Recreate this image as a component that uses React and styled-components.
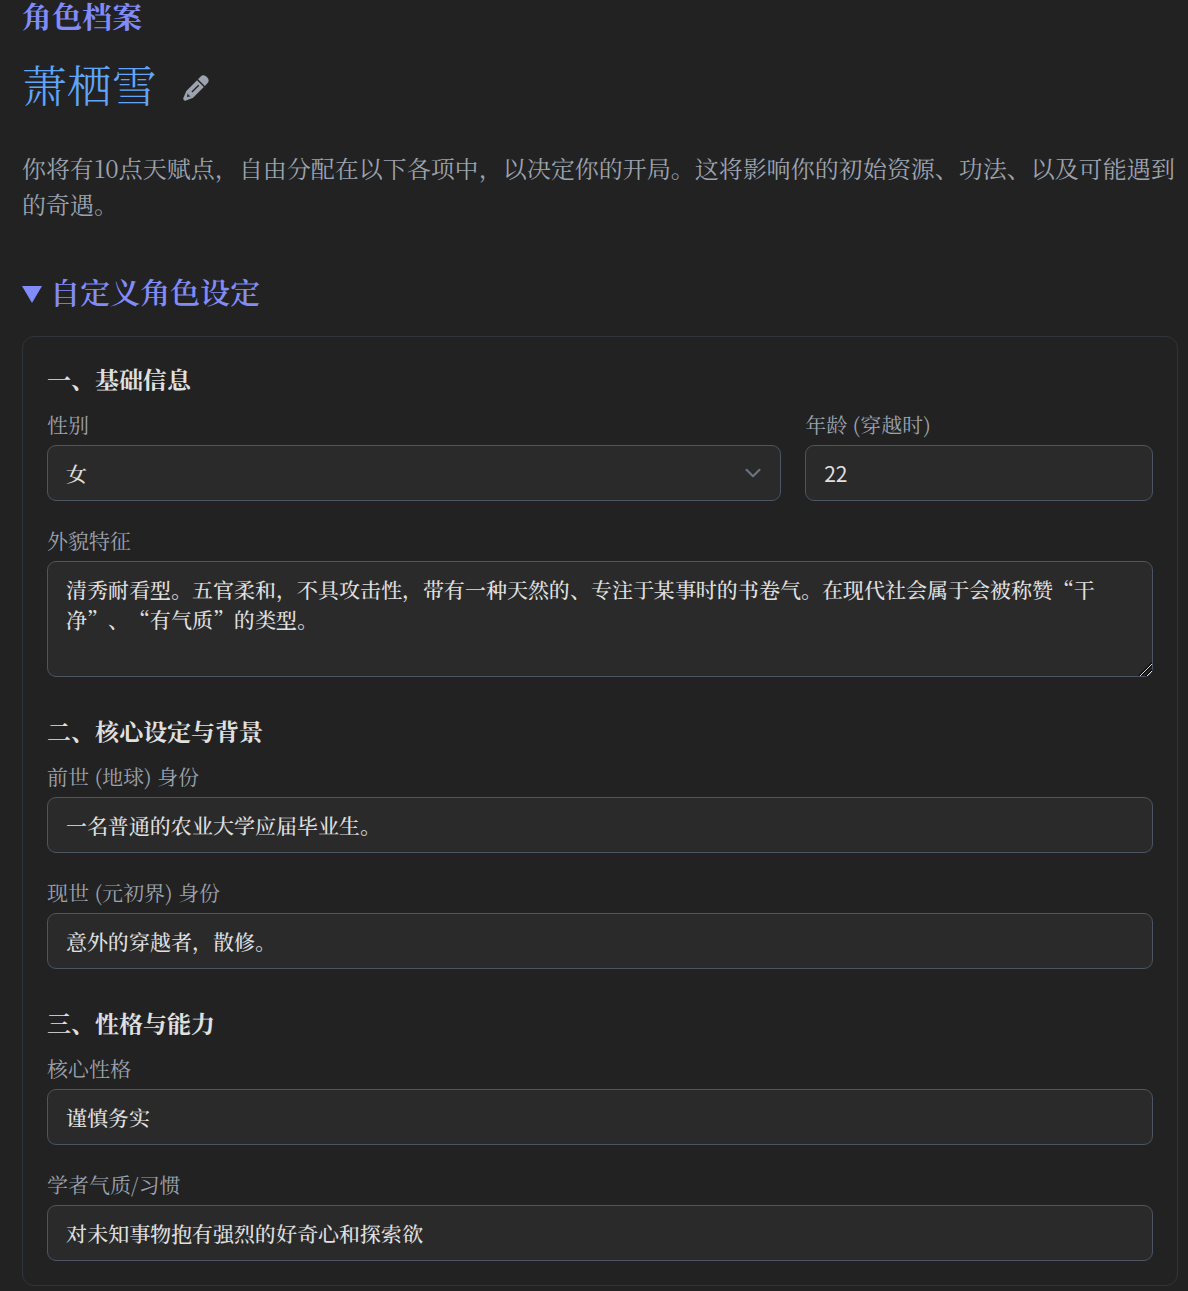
import React, { useState } from 'react';
import styled, { createGlobalStyle, css } from 'styled-components';

const colors = {
  page: '#222222',
  field: '#2a2a2a',
  border: '#4b5563',
  panelBorder: '#2f343a',
  accent: '#818cf8',
  name: '#60a5fa',
  text: '#e0e0e0',
  muted: '#9ca3af',
}

const serif = '"Noto Serif SC", "Noto Serif CJK SC", "Noto Sans CJK SC", serif'

const GlobalStyle = createGlobalStyle`
  * {
    box-sizing: border-box;
  }
  body {
    margin: 0;
    background: ${colors.page};
    color: ${colors.text};
    font-family: ${serif};
  }
`

const Page = styled.main`
  padding: 0 10px 5px 22px;
`

const PageTitle = styled.h2`
  margin: 0 0 26px;
  color: ${colors.accent};
  font-size: 30px;
  font-weight: 700;
  line-height: 30px;
`

const NameRow = styled.div`
  display: flex;
  align-items: flex-end;
  gap: 15px;
  margin-bottom: 38px;
`

const Name = styled.h1`
  margin: 0;
  color: ${colors.name};
  font-size: 45px;
  font-weight: 300;
  line-height: 56px;
`

const EditButton = styled.button`
  display: flex;
  padding: 11px;
  border: 0;
  background: none;
  color: #9ca3af;
  cursor: pointer;
`

const Intro = styled.p`
  margin: 0 0 49px;
  color: ${colors.muted};
  font-size: 24px;
  line-height: 36px;
`

const Summary = styled.summary`
  display: flex;
  align-items: center;
  gap: 8px;
  margin-bottom: 24px;
  color: ${colors.accent};
  font-size: 30px;
  font-weight: 600;
  line-height: 41px;
  list-style: none;
  cursor: pointer;
`

const Marker = styled.svg`
  margin-top: 5px;
`

const Panel = styled.div`
  padding: 24px;
  border: 1px solid ${colors.panelBorder};
  border-radius: 12px;
`

const Section = styled.section`
  display: flex;
  flex-direction: column;
  gap: 24px;
  & + & {
    margin-top: 36px;
  }
`

const SectionTitle = styled.h3`
  margin: 0 0 -12px;
  font-size: 24px;
  font-weight: 700;
  line-height: 36px;
`

const Columns = styled.div`
  display: grid;
  grid-template-columns: 19fr 9fr;
  gap: 24px;
`

const Field = styled.div`
  display: flex;
  flex-direction: column;
  gap: 6px;
  min-width: 0;
`

const Label = styled.label`
  color: ${colors.muted};
  font-size: 21px;
  line-height: 30px;
`

const control = css`
  width: 100%;
  height: 56px;
  margin: 0;
  padding: 0 18px;
  border: 1px solid ${colors.border};
  border-radius: 9px;
  background: ${colors.field};
  color: ${colors.text};
  font-family: ${serif};
  font-size: 21px;
  font-weight: 500;
  line-height: 30px;
  text-spacing-trim: space-all;
  outline: none;
  appearance: none;
  &:focus {
    border-color: ${colors.accent};
  }
`

const Input = styled.input`
  ${control}
  appearance: textfield;
  &[type='number'] {
    font-family: "Noto Sans CJK SC", sans-serif;
    font-weight: 400;
  }
  &::-webkit-inner-spin-button {
    display: none;
  }
`

const TextArea = styled.textarea`
  ${control}
  display: block;
  height: 116px;
  padding: 12px 18px;
  resize: vertical;
  &::-webkit-resizer {
    background: linear-gradient(
      135deg,
      transparent 53%,
      #111 53% 57%,
      #ddd 57% 63%,
      #111 63% 67%,
      transparent 67% 76%,
      #111 76% 80%,
      #ddd 80% 86%,
      transparent 86%
    );
  }
`

const SelectWrap = styled.div`
  display: grid;
  align-items: center;
  & > * {
    grid-area: 1 / 1;
  }
`

const Select = styled.select`
  ${control}
`

const Chevron = styled.svg`
  justify-self: end;
  margin-right: 16px;
  pointer-events: none;
`

const PencilIcon = () => (
  <svg width="26" height="26" viewBox="0 0 26 26" fill="currentColor" aria-hidden="true">
    <g transform="translate(0.6 25.4) rotate(-45)">
      <path
        fillRule="evenodd"
        d="M1 -1.6 L8.6 -4.8 H23.8 V4.8 H8.6 L1 1.6 Q-0.4 0 1 -1.6 Z M4.8 0 L8 -2.2 L7.2 0 L8 2.2 Z M11.8 -0.7 V0.7 H21.4 V-0.7 Z"
      />
      <path d="M25.2 -4.8 H28.6 Q33 -4.8 33 0 Q33 4.8 28.6 4.8 H25.2 Z" />
    </g>
  </svg>
)

const TextField = ({ id, label, value, type = 'text' }) => (
  <Field>
    <Label htmlFor={id}>{label}</Label>
    <Input id={id} type={type} defaultValue={value} />
  </Field>
)

const App = () => {
  const [gender, setGender] = useState('女')

  return (
    <Page lang="zh-CN">
      <GlobalStyle />
      <PageTitle>角色档案</PageTitle>
      <NameRow>
        <Name>萧栖雪</Name>
        <EditButton type="button" aria-label="编辑姓名">
          <PencilIcon />
        </EditButton>
      </NameRow>
      <Intro>
        你将有10点天赋点，自由分配在以下各项中，以决定你的开局。这将影响你的初始资源、功法、以及可能遇到的奇遇。
      </Intro>

      <details open>
        <Summary>
          <Marker width="20" height="17" viewBox="0 0 20 17" fill="currentColor" aria-hidden="true">
            <path d="M0 0H20L10 17Z" />
          </Marker>
          自定义角色设定
        </Summary>
        <Panel>
          <Section>
            <SectionTitle>一、基础信息</SectionTitle>
            <Columns>
              <Field>
                <Label htmlFor="gender">性别</Label>
                <SelectWrap>
                  <Select id="gender" value={gender} onChange={e => setGender(e.target.value)}>
                    <option>女</option>
                    <option>男</option>
                  </Select>
                  <Chevron width="24" height="24" viewBox="0 0 24 24" fill="none" aria-hidden="true">
                    <path
                      d="M5.5 8.8L12 15.2L18.5 8.8"
                      stroke="#6b7280"
                      strokeWidth="2.2"
                      strokeLinecap="round"
                      strokeLinejoin="round"
                    />
                  </Chevron>
                </SelectWrap>
              </Field>
              <TextField id="age" type="number" label="年龄 (穿越时)" value="22" />
            </Columns>
            <Field>
              <Label htmlFor="looks">外貌特征</Label>
              <TextArea
                id="looks"
                spellCheck={false}
                defaultValue="清秀耐看型。五官柔和，不具攻击性，带有一种天然的、专注于某事时的书卷气。在现代社会属于会被称赞“干净”、“有气质”的类型。"
              />
            </Field>
          </Section>

          <Section>
            <SectionTitle>二、核心设定与背景</SectionTitle>
            <TextField id="past" label="前世 (地球) 身份" value="一名普通的农业大学应届毕业生。" />
            <TextField id="present" label="现世 (元初界) 身份" value="意外的穿越者，散修。" />
          </Section>

          <Section>
            <SectionTitle>三、性格与能力</SectionTitle>
            <TextField id="nature" label="核心性格" value="谨慎务实" />
            <TextField id="habit" label="学者气质/习惯" value="对未知事物抱有强烈的好奇心和探索欲" />
          </Section>
        </Panel>
      </details>
    </Page>
  )
}

export default App
